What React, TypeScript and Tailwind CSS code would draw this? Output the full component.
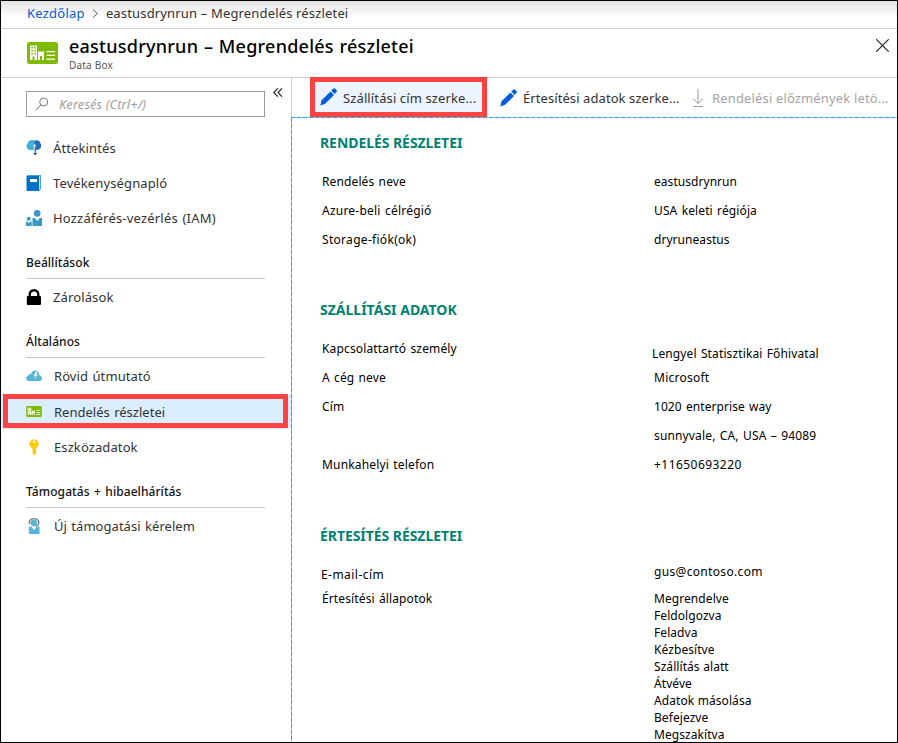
import type { ReactNode } from "react";

function DataBoxIcon({ className }: { className: string }) {
  return (
    <svg className={className} viewBox="0 0 31 22">
      <rect width="31" height="22" rx="2.5" fill="#7fba00" />
      <path fill="#fff" d="M3 3.500h7v14.500H3z M11 9.500h6v8.500h-2v-4h-2v4h-2z M19.500 9h8.500v1.200h-8.500z M19.500 12.700h8.500v1.200h-8.500z M19.500 16.500h8.500v1.300h-8.500z" />
      <path fill="#7fba00" d="M4.300 4.800h1.600v1.600H4.300z M7.200 4.800h1.600v1.600H7.200z M4.300 7.900h1.600v1.600H4.300z M7.200 7.900h1.600v1.600H7.200z M4.300 11h1.600v1.600H4.300z M7.200 11h1.600v1.600H7.200z M5.500 14.500h2V18h-2z" />
    </svg>
  );
}

function OverviewIcon() {
  return (
    <svg className="size-4" viewBox="0 0 16 16">
      <path fill="#1f6fba" d="M8 1C10-.5 14 .3 14.500 3.500c1.500 2 .6 6-2.500 6.300H8z" />
      <path fill="#45aed6" d="M8.300.5C5-.5 2.500.5 2 2.900-.3 4.500.1 8.500 3 9.700c2 .8 4 .6 5.300-.5z" />
      <path fill="#1f6fba" d="M8.600 6h1.300v7h1.700L9.300 15.500 7 13h1.600z" />
      <path fill="#fff" d="M8.600 4 10.300 6.300H9v3.200h-.8V6.300H6.900z" />
    </svg>
  );
}

function LogIcon() {
  return (
    <svg className="size-4" viewBox="0 0 16 16">
      <path fill="#4ba0dc" d="M1 0h14v14l-2 2H1z" />
      <path fill="#fff" d="M13.300 1H14v13.300h-.7z" />
      <path fill="#0072c6" d="M.5 1H13v15H.5z" />
      <path fill="#fff" d="M4 4h7v3H4z" />
    </svg>
  );
}

function PeopleIcon() {
  return (
    <svg className="size-4" viewBox="0 0 16 16" fill="#3999c6">
      <circle cx="11.200" cy="3.400" r="3.300" />
      <path d="M6.500 8h2.300l2.500 3 2.500-3H16v8H6.500z" />
      <circle cx="2.700" cy="8.800" r="2" />
      <path d="M0 11.500h1.300l1.400 1.700 1.500-1.700h1.500V16H0z" />
    </svg>
  );
}

function LockIcon() {
  return (
    <svg className="size-4" viewBox="0 0 16 16">
      <path fill="none" stroke="#000" strokeWidth="2.400" d="M3.700 8V5.500a4.300 4.300 0 0 1 8.600 0V8" />
      <rect x=".8" y="7" width="14.200" height="9" rx="1" />
    </svg>
  );
}

function QuickCloudIcon() {
  return (
    <svg className="size-4" viewBox="0 0 16 16">
      <path fill="#59b4d9" d="M3 13C-.5 13-.8 8.500 2.200 8.100 2.300 6.200 4 5.800 5 6.300 5.500 3 10 1.300 12.300 3.700c1 1 .9 2.400.8 3.200C17 7.500 16.800 13 13.400 13z" />
      <path fill="#fff" d="M10.200 3.500 7.700 7.700h1.900L8.200 11l3.700-4.300h-1.800l1.800-3.200z" />
    </svg>
  );
}

function KeyIcon() {
  return (
    <svg className="size-4" viewBox="0 0 16 16">
      <path fill="#fcd116" d="M4.500 1.800 8 0l3.700 1.800L13 5l-1.400 3L10 9.500v1.300L9.700 12l.5 1v1.500L8.500 16 6.500 14.500v-5L4.300 8 3 5z" />
      <path fill="#f3b200" d="M7.800 9.500h1V15h-1zM4 5.200h8v1H4z" />
      <circle cx="8" cy="2.700" r="1.100" fill="#fff" />
    </svg>
  );
}

function SupportIcon() {
  return (
    <svg className="size-4" viewBox="0 0 16 16">
      <path fill="none" stroke="#7a7a7a" strokeWidth="1.300" d="M3.600 6C2.500 2 5 .7 8 .7S13.500 2.500 12.500 6c-.3 1.700-1.700 2.200-3 2.500" />
      <circle cx="7.900" cy="4.900" r="3.300" fill="#59b4d9" />
      <path fill="#59b4d9" d="M2.800 8.800h2.700L8 12l3-3.200h2.500V16H2.800z" />
    </svg>
  );
}

function PencilIcon() {
  return (
    <svg className="h-[18px] w-[17px] shrink-0" viewBox="0 0 17 18" fill="#015cda">
      <path d="M1.600 12.300 10.500 3.400l3.500 3.500-8.900 8.900L.3 17.400z" />
      <path d="m11.300 2.600 1.900-1.900c.6-.6 1.400-.5 2 .1l1.200 1.200c.6.6.7 1.400.1 2l-2 2z" />
    </svg>
  );
}

function NavItem({ icon, children, className = "", textClass = "" }: { icon: ReactNode; children: string; className?: string; textClass?: string }) {
  return (
    <div className={`flex h-[35px] items-center pl-[25px] text-[13px] text-[#323232] ${className}`}>
      <span className="mr-[11px] flex w-4 shrink-0 justify-center">{icon}</span>
      <span className={`pt-0.5 whitespace-nowrap [word-spacing:1px] ${textClass || "tracking-[0.12px]"}`}>{children}</span>
    </div>
  );
}

function NavHeading({ children }: { children: string }) {
  return (
    <h2 className="mr-[26px] ml-[25px] flex h-11 items-end border-b border-[#c8c8c8] pb-1.5 text-xs leading-[18px] font-medium tracking-[0.07px] text-[#111] [word-spacing:1.2px]">
      {children}
    </h2>
  );
}

function SectionTitle({ children, className = "" }: { children: string; className?: string }) {
  return <h3 className={`ml-7 text-sm leading-5 font-bold text-[#008272] [word-spacing:0px] ${className}`}>{children}</h3>;
}

function Row({ label, value, labelClass = "", valueClass = "" }: { label: string; value: string; labelClass?: string; valueClass?: string }) {
  return (
    <div className="flex h-[29px] items-center pl-[30px]">
      <span className="w-[332px] shrink-0">
        <span className={labelClass}>{label}</span>
      </span>
      <span className={`whitespace-nowrap ${valueClass}`}>{value}</span>
    </div>
  );
}

const states = [
  "Megrendelve",
  "Feldolgozva",
  "Feladva",
  "Kézbesítve",
  "Szállítás alatt",
  "Átvéve",
  "Adatok másolása",
  "Befejezve",
  "Megszakítva",
];

export default function App() {
  return (
    <div className="flex h-[743px] w-[898px] flex-col overflow-hidden border border-black bg-white font-['Noto_Sans',sans-serif] text-black">
      <nav className="flex h-7 shrink-0 items-center border-b border-[#cfcfcf] bg-linear-to-b from-[#e3e1e3] to-white to-60% pb-0.5 pl-[26px] text-[13px] tracking-[0.16px] text-[#323232]">
        <span className="tracking-[0.25px] text-[#015cda]">Kezdőlap</span>
        <svg className="mx-[7px] h-[9px] w-[7px]" viewBox="0 0 7 9" fill="none" stroke="#555">
          <path d="m1 .5 4.500 4-4.500 4" />
        </svg>
        <span>eastusdrynrun – Megrendelés részletei</span>
      </nav>

      <header className="flex h-[49px] shrink-0 items-start border-b border-[#cfcfcf] pl-[26px]">
        <DataBoxIcon className="mt-[13px] h-[22px] w-[31px]" />
        <div className="ml-[11px] pt-[5px]">
          <h1 className="text-lg leading-6 font-medium tracking-[0.24px] [word-spacing:0.8px]">eastusdrynrun – Megrendelés részletei</h1>
          <p className="text-[10px] leading-[14px] tracking-[0.2px] text-[#555]">Data Box</p>
        </div>
        <svg className="mt-2.5 mr-2 ml-auto size-[13px]" viewBox="0 0 13 13" stroke="#222" strokeWidth="1.200">
          <path d="m.3.3 12.400 12.400m0-12.400L.3 12.700" />
        </svg>
      </header>

      <div className="flex min-h-0 flex-1">
        <aside className="w-[290px] shrink-0">
          <div className="flex h-[52px] pt-[13px] pl-[25px]">
            <div className="flex h-[26px] w-[239px] items-center border border-[#999] pl-2 text-[13px] text-[#a0a0a0] italic">
              <svg className="mr-2.5 size-[14px]" viewBox="0 0 14 14" fill="none" stroke="#777">
                <circle cx="8.700" cy="5" r="4" />
                <path d="M5.800 8 .7 13.200" />
              </svg>
              <span className="pt-px tracking-[0.05px]">Keresés (Ctrl+/)</span>
            </div>
            <svg className="mt-[-3px] ml-2 h-[9px] w-[10px]" viewBox="0 0 10 9" fill="none" stroke="#222" strokeWidth="1.100">
              <path d="M4.800.3.800 4.500l4 4.200M9 .3 5 4.500l4 4.200" />
            </svg>
          </div>
          <NavItem icon={<OverviewIcon />}>Áttekintés</NavItem>
          <NavItem icon={<LogIcon />}>Tevékenységnapló</NavItem>
          <NavItem textClass="tracking-[0.2px]" icon={<PeopleIcon />}>Hozzáférés-vezérlés (IAM)</NavItem>
          <NavHeading>Beállítások</NavHeading>
          <NavItem icon={<LockIcon />}>Zárolások</NavItem>
          <NavHeading>Általános</NavHeading>
          <NavItem textClass="pl-px tracking-[0.08px]" icon={<QuickCloudIcon />}>Rövid útmutató</NavItem>
          <div className="mt-px h-[35px] bg-[#dbeefe] pr-[3px] pl-[2px]">
            <div className="h-[34px] border-[5px] border-[#ff4343]">
              <NavItem className="-mt-[5px] -ml-[7px]" textClass="pl-px tracking-[0.01px]" icon={<DataBoxIcon className="h-[11px] w-4" />}>
                Rendelés részletei
              </NavItem>
            </div>
          </div>
          <NavItem textClass="pl-px tracking-[0.1px]" icon={<KeyIcon />}>Eszközadatok</NavItem>
          <NavHeading>Támogatás + hibaelhárítás</NavHeading>
          <NavItem textClass="pl-px tracking-[0.04px]" icon={<SupportIcon />}>Új támogatási kérelem</NavItem>
        </aside>

        <main className="flex min-w-0 flex-1 flex-col">
          <div className="flex h-[39px] shrink-0 border-l border-[#cfcfcf] text-[13px] tracking-[0.08px] whitespace-nowrap text-[#323232]">
            <div className="-mt-px ml-[18px] flex h-10 w-[177px] items-center border-[5px] border-[#ff4343] bg-[#ecf5ff] pl-[5px]">
              <PencilIcon />
              <span className="ml-1.5 pt-[3px] tracking-[0.12px]">Szállítási cím szerke...</span>
            </div>
            <div className="ml-[13px] flex w-[180px] items-center">
              <PencilIcon />
              <span className="ml-1.5 pt-0.5">Értesítési adatok szerke...</span>
            </div>
            <div className="ml-[12px] flex items-center tracking-[0.15px] text-[#a3a3a3]">
              <svg className="mr-2 h-[18px] w-3 shrink-0" viewBox="0 0 12 18" fill="none" stroke="#999">
                <path d="M6 0v14.500M1 9.500l5 5 5-5M1 17.500h10" />
              </svg>
              <span className="pt-0.5">Rendelési előzmények letö...</span>
            </div>
          </div>
          <div className="h-px shrink-0 bg-[repeating-linear-gradient(90deg,#10b0e8_0_4px,#c4bcba_4px_6px)]" />
          <div className="flex min-h-0 flex-1">
            <div className="w-px shrink-0 bg-[repeating-linear-gradient(180deg,#10b0e8_0_4px,#c4bcba_4px_6px)]" />
            <div className="flex-1 text-xs tracking-[0.12px] [word-spacing:1px]">
              <SectionTitle className="mt-[15px] mb-[14px] tracking-[-0.06px]">RENDELÉS RÉSZLETEI</SectionTitle>
              <Row label="Rendelés neve" value="eastusdrynrun" valueClass="tracking-[0.05px]" />
              <Row label="Azure-beli célrégió" labelClass="tracking-[0.22px]" value="USA keleti régiója" />
              <Row label="Storage-fiók(ok)" labelClass="tracking-[0.3px]" value="dryruneastus" valueClass="tracking-[0.05px]" />
              <SectionTitle className="mt-[46px] mb-[14px] tracking-[0px]">SZÁLLÍTÁSI ADATOK</SectionTitle>
              <Row label="Kapcsolattartó személy" labelClass="tracking-[0.15px]" value="Lengyel Statisztikai Főhivatal" valueClass="-ml-0.5 pt-[10px]" />
              <Row label="A cég neve" value="Microsoft" valueClass="tracking-[0.25px]" />
              <Row label="Cím" value="1020 enterprise way" valueClass="tracking-[0.07px]" />
              <Row label="" value="sunnyvale, CA, USA – 94089" valueClass="tracking-[0.15px]" />
              <Row label="Munkahelyi telefon" labelClass="tracking-[0.17px]" value="+11650693220" valueClass="tracking-[0.45px]" />
              <SectionTitle className="mt-[47px] mb-[14px] tracking-[-0.06px]">ÉRTESÍTÉS RÉSZLETEI</SectionTitle>
              <Row label="E-mail-cím" labelClass="-ml-px tracking-[0.45px]" value="gus@contoso.com" valueClass="pb-[5px] tracking-[0.33px]" />
              <div className="mt-px flex pl-[30px] leading-[17px] tracking-[0.07px]">
                <span className="w-[332px] tracking-[0.12px]">Értesítési állapotok</span>
                <ul className="[word-spacing:0.3px]">
                  {states.map((s) => (
                    <li key={s}>{s}</li>
                  ))}
                </ul>
              </div>
            </div>
          </div>
        </main>
      </div>
    </div>
  );
}
